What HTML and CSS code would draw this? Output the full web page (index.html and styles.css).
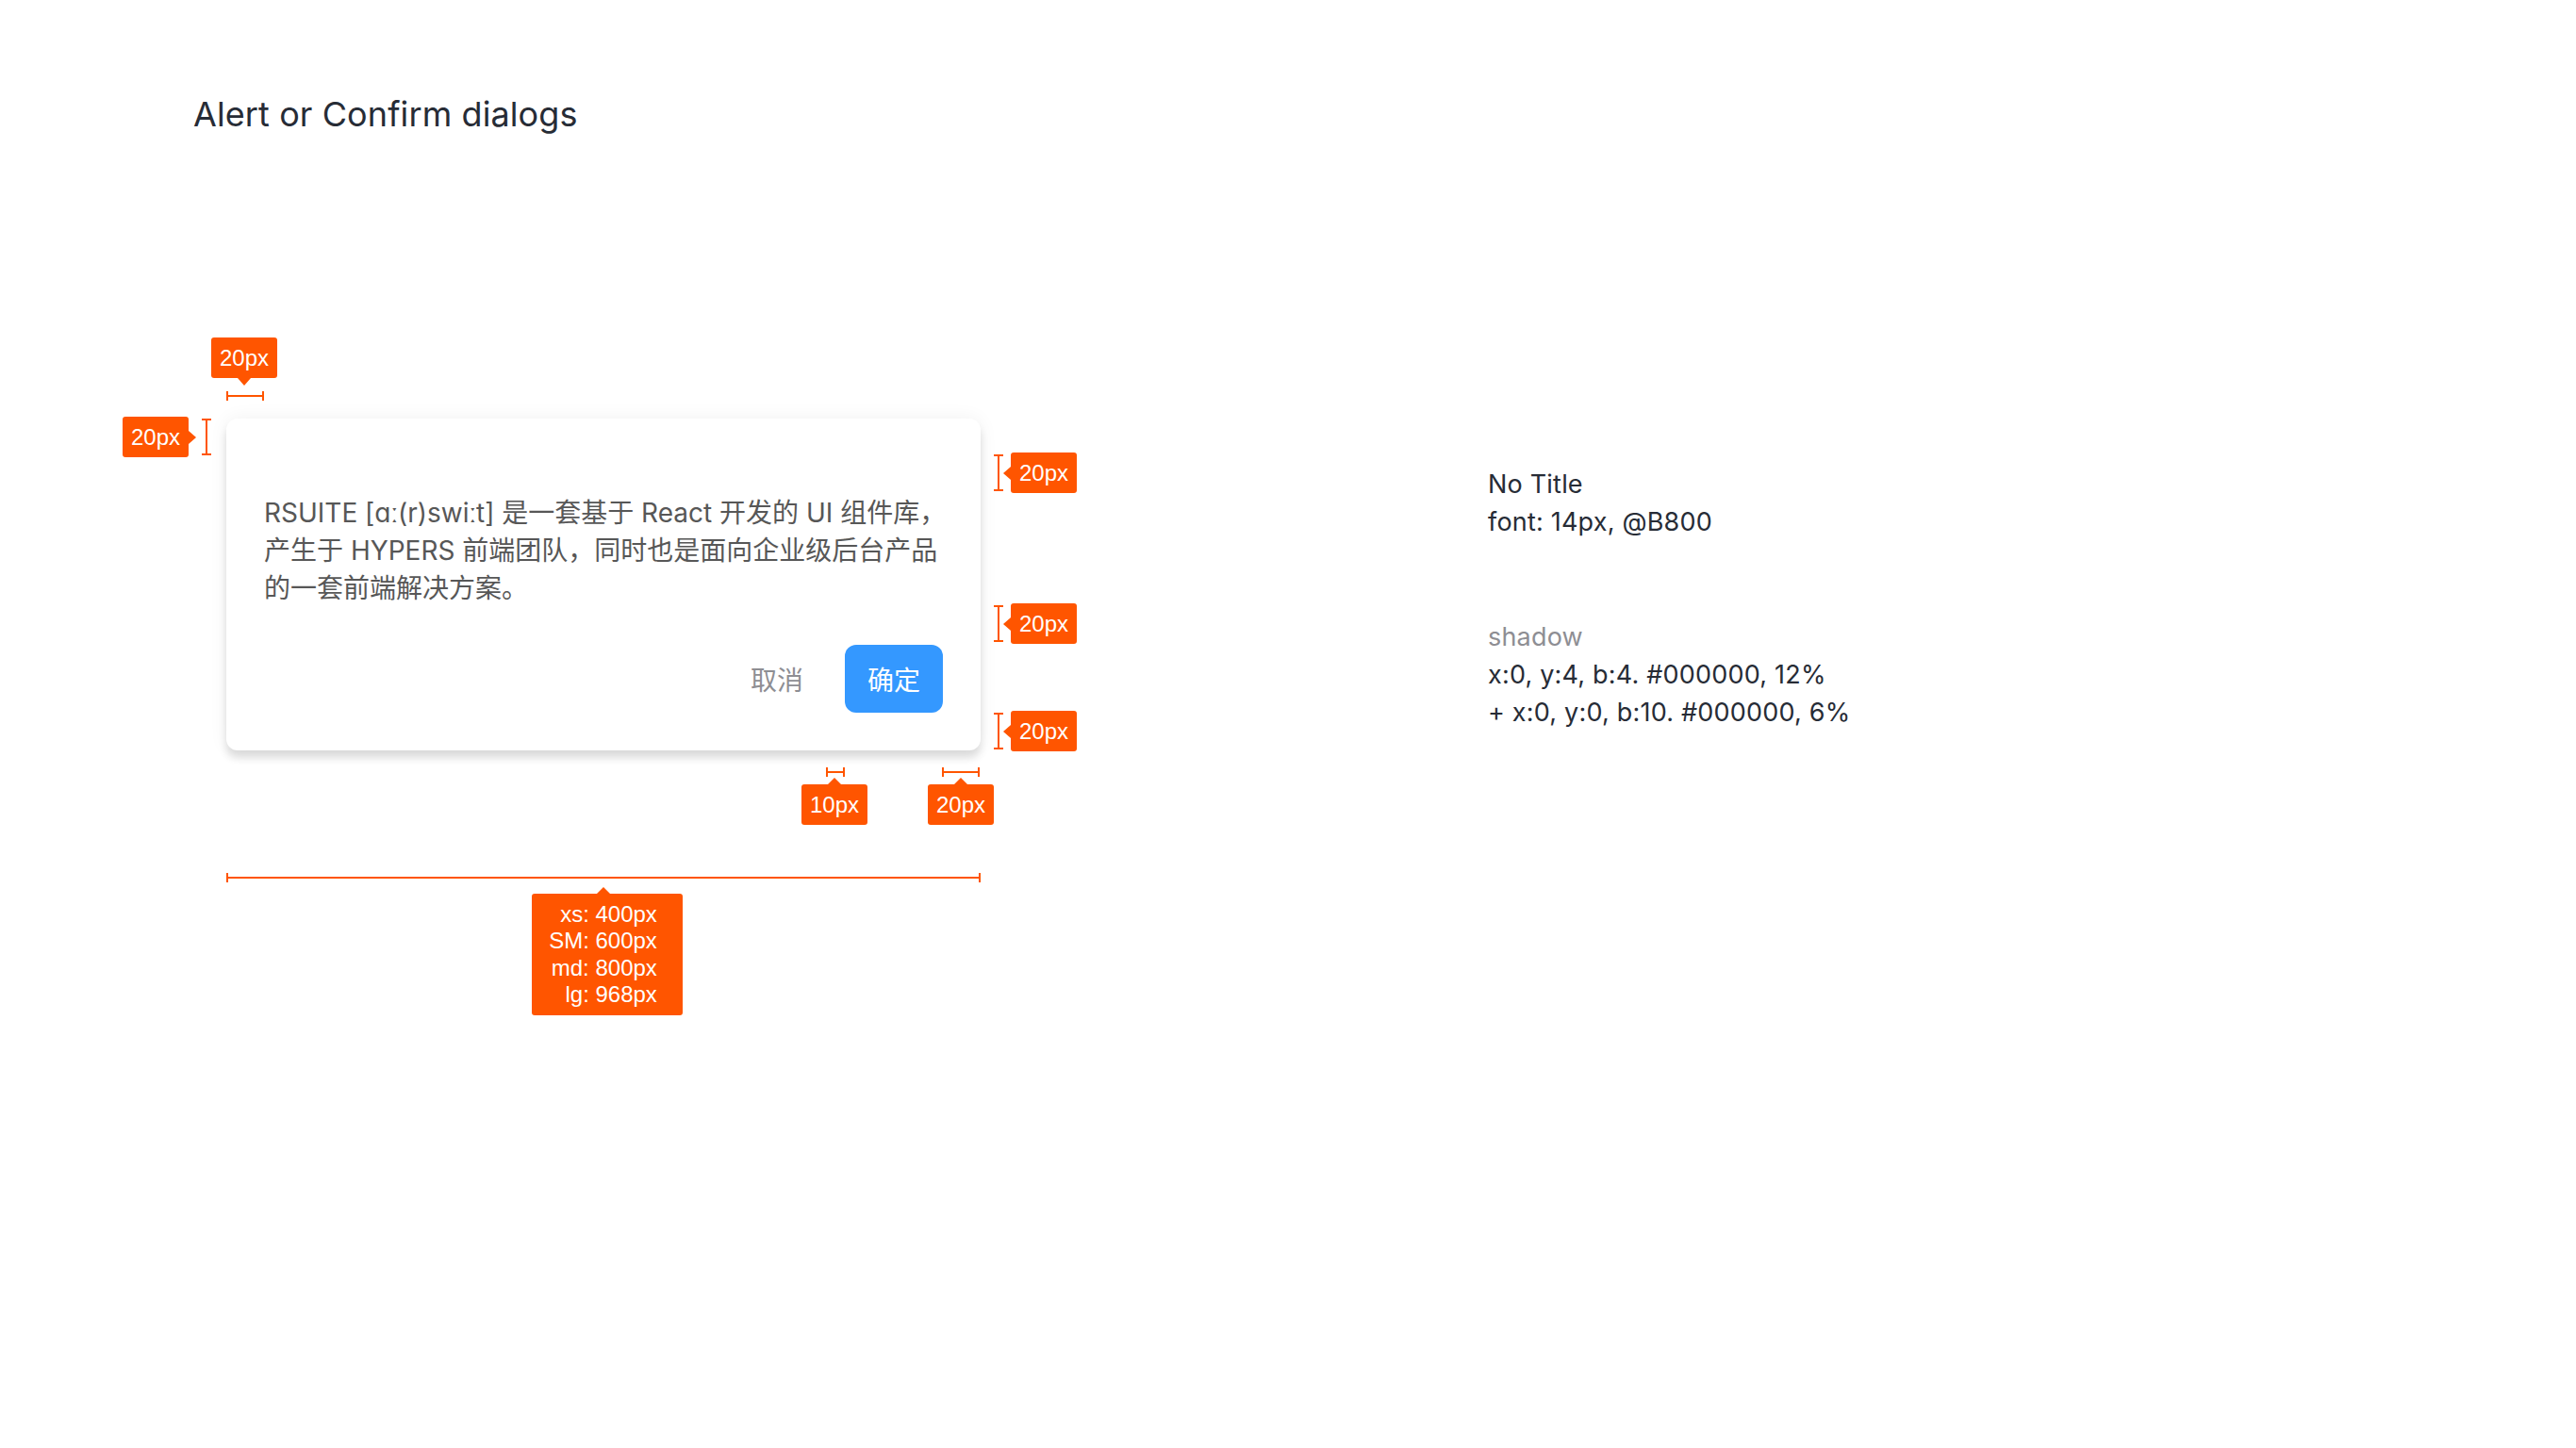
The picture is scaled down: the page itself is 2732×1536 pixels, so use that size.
FILE: index.html
```html
<!DOCTYPE html>
<html lang="zh-CN">
<head>
<meta charset="utf-8">
<title>Alert or Confirm dialogs</title>
<link rel="stylesheet" href="styles.css">
</head>
<body>
<div class="page">
  <h1 class="page-title">Alert or Confirm dialogs</h1>
  <div class="content">
    <div class="spec">
      <div class="dialog-wrap">
        <div class="dialog">
          <p class="dialog-body">RSUITE [ɑː(r)swiːt] 是一套基于 React 开发的 UI 组件库，<br>产生于 HYPERS 前端团队，同时也是面向企业级后台产品<br>的一套前端解决方案。</p>
          <div class="dialog-footer">
            <button class="btn btn-subtle" type="button">取消</button>
            <button class="btn btn-primary" type="button">确定</button>
          </div>
        </div>

        <div class="anno anno-top">
          <span class="tag tag-arrow-down">20px</span>
          <span class="hbar hbar-40"></span>
        </div>

        <div class="anno anno-left">
          <span class="tag tag-arrow-right">20px</span>
          <span class="vbar"></span>
        </div>

        <div class="anno anno-right anno-r1">
          <span class="vbar"></span>
          <span class="tag tag-arrow-left">20px</span>
        </div>
        <div class="anno anno-right anno-r2">
          <span class="vbar"></span>
          <span class="tag tag-arrow-left">20px</span>
        </div>
        <div class="anno anno-right anno-r3">
          <span class="vbar"></span>
          <span class="tag tag-arrow-left">20px</span>
        </div>

        <div class="anno anno-bottom anno-b1">
          <span class="hbar hbar-20"></span>
          <span class="tag tag-arrow-up">10px</span>
        </div>
        <div class="anno anno-bottom anno-b2">
          <span class="hbar hbar-40"></span>
          <span class="tag tag-arrow-up">20px</span>
        </div>
      </div>

      <div class="width-measure">
        <span class="hbar hbar-full"></span>
        <div class="tag tag-multi tag-arrow-up">xs: 400px<br>SM: 600px<br>md: 800px<br>lg: 968px</div>
      </div>
    </div>

    <div class="notes">
      <div class="note-block">
        <div class="note-line">No Title</div>
        <div class="note-line">font: 14px, @B800</div>
      </div>
      <div class="note-block note-block-gap">
        <div class="note-line note-muted">shadow</div>
        <div class="note-line">x:0, y:4, b:4. #000000, 12%</div>
        <div class="note-line">+ x:0, y:0, b:10. #000000, 6%</div>
      </div>
    </div>
  </div>
</div>
</body>
</html>
```

FILE: styles.css
```css
html, body {
  margin: 0;
  padding: 0;
  background: #ffffff;
}

body {
  font-family: "Inter", "Noto Sans CJK SC", sans-serif;
  color: #272c36;
}

.page {
  padding: 96px 0 0 205px;
}

.page-title {
  margin: 0;
  font-size: 36px;
  line-height: 50px;
  font-weight: 400;
  letter-spacing: 0.1px;
  color: #272c36;
}

.content {
  display: flex;
  align-items: flex-start;
  margin: 298px 0 0 35px;
}

.spec {
  width: 800px;
  display: flex;
  flex-direction: column;
}

.dialog-wrap {
  position: relative;
}

.dialog {
  width: 800px;
  box-sizing: border-box;
  padding: 80px 40px 40px;
  background: #ffffff;
  border-radius: 12px;
  box-shadow: 0 8px 8px rgba(0, 0, 0, 0.12), 0 0 20px rgba(0, 0, 0, 0.06);
}

.dialog-body {
  margin: 0;
  font-family: "Inter", "Noto Sans CJK SC", sans-serif;
  font-size: 28px;
  line-height: 40px;
  color: #575757;
  white-space: nowrap;
}

.dialog-footer {
  display: flex;
  justify-content: flex-end;
  gap: 20px;
  margin-top: 40px;
}

.btn {
  width: 104px;
  height: 72px;
  border: none;
  border-radius: 12px;
  font-family: "Noto Sans CJK SC", sans-serif;
  font-size: 28px;
  padding: 0;
  cursor: pointer;
}

.btn-subtle {
  background: transparent;
  color: #8e8e93;
}

.btn-primary {
  background: #3498ff;
  color: #ffffff;
}

/* ---------- annotations ---------- */

.anno {
  position: absolute;
  display: flex;
  align-items: center;
}

.tag {
  position: relative;
  display: block;
  box-sizing: border-box;
  height: 43px;
  padding: 0 9px;
  background: #ff5500;
  color: #ffffff;
  font-family: "Liberation Sans", Arial, sans-serif;
  font-size: 24px;
  line-height: 43px;
  border-radius: 3px;
  white-space: nowrap;
}

.tag::after {
  content: "";
  position: absolute;
  width: 0;
  height: 0;
  border: 7px solid transparent;
}

.tag-arrow-down::after {
  top: 100%;
  left: 50%;
  margin-left: -7px;
  border-top: 8px solid #ff5500;
  border-bottom-width: 0;
}

.tag-arrow-up::after {
  bottom: 100%;
  left: 50%;
  margin-left: -7px;
  border-bottom: 7px solid #ff5500;
  border-top-width: 0;
}

.tag-arrow-right::after {
  left: 100%;
  top: 50%;
  margin-top: -7px;
  border-left: 8px solid #ff5500;
  border-right-width: 0;
}

.tag-arrow-left::after {
  right: 100%;
  top: 50%;
  margin-top: -7px;
  border-right: 8px solid #ff5500;
  border-left-width: 0;
}

.hbar {
  display: block;
  box-sizing: border-box;
  height: 10px;
  border-left: 2px solid #ff5500;
  border-right: 2px solid #ff5500;
  background: linear-gradient(#ff5500, #ff5500) center / 100% 2px no-repeat;
}

.hbar-20 { width: 20px; }
.hbar-40 { width: 40px; }
.hbar-full { width: 800px; }

.vbar {
  display: block;
  box-sizing: border-box;
  width: 10px;
  height: 39px;
  border-top: 2px solid #ff5500;
  border-bottom: 2px solid #ff5500;
  background: linear-gradient(#ff5500, #ff5500) center / 2px 100% no-repeat;
}

.anno-top {
  left: -16px;
  top: -86px;
  width: 70px;
  flex-direction: column;
}

.anno-top .hbar {
  margin-top: 14px;
  margin-left: 2px;
}

.anno-left {
  left: -110px;
  top: -2px;
}

.anno-left .vbar {
  margin-left: 14px;
}

.anno-right {
  left: 814px;
}

.anno-right .tag {
  margin-left: 8px;
}

.anno-r1 { top: 36px; }
.anno-r2 { top: 196px; }
.anno-r3 { top: 310px; }

.anno-bottom {
  top: 370px;
  width: 70px;
  flex-direction: column;
}

.anno-bottom .tag {
  margin-top: 8px;
}

.anno-b1 { left: 610px; }
.anno-b1 .hbar { margin-left: 2px; }
.anno-b2 { left: 744px; }

.width-measure {
  display: flex;
  flex-direction: column;
  align-items: center;
  margin-top: 130px;
}

.tag-multi {
  height: auto;
  margin: 12px 0 0 8px;
  padding: 8px 27px 8px 18px;
  line-height: 28.33px;
  text-align: right;
}

.tag-multi.tag-arrow-up::after {
  margin-left: -11px;
}

/* ---------- notes ---------- */

.notes {
  margin: 50px 0 0 538px;
  font-family: "Inter", "Noto Sans CJK SC", sans-serif;
  font-size: 27px;
  letter-spacing: 0.2px;
  line-height: 40px;
  color: #272c36;
}

.note-block-gap {
  margin-top: 82px;
}

.note-muted {
  color: #8e8e93;
}
```
